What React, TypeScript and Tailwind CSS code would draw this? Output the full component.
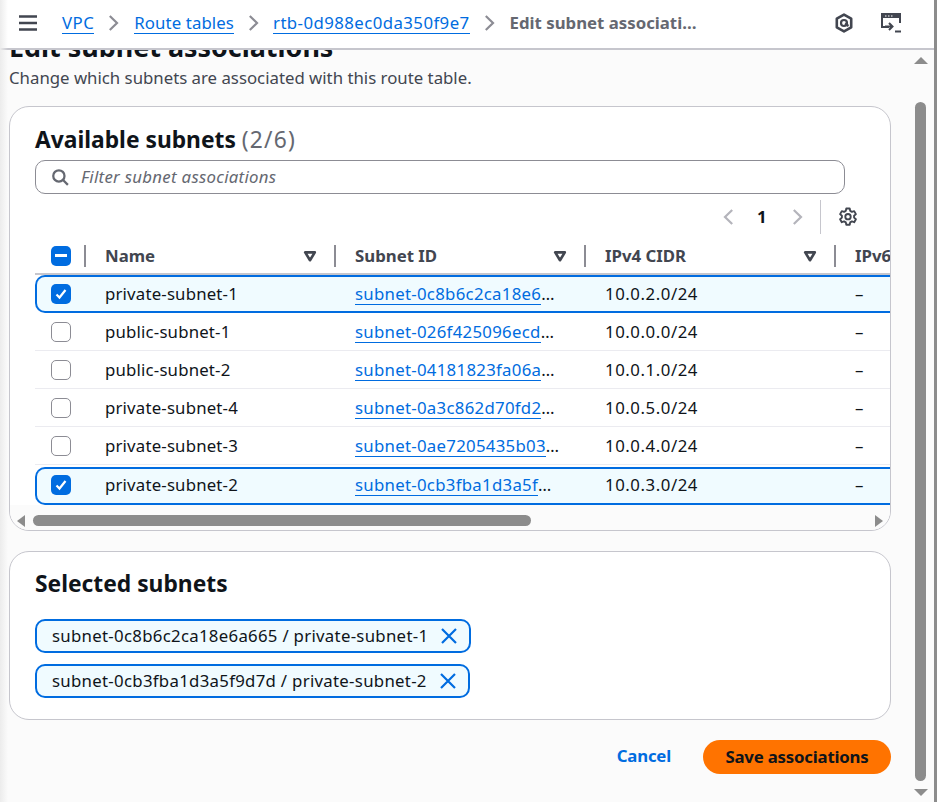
import React from "react";

const F = "font-['Noto_Sans',sans-serif]";

function Chevron({ className = "" }: { className?: string }) {
  return (
    <svg width="16" height="16" viewBox="0 0 16 16" fill="none" className={className}>
      <path d="M3.8 1 11 8 3.8 15" stroke="currentColor" strokeWidth="2.2" />
    </svg>
  );
}

function SortDown() {
  return (
    <svg width="14" height="14" viewBox="0 0 16 16" fill="none" className="text-[#424650]">
      <path d="M2.5 3.8h11L8 12.8z" stroke="currentColor" strokeWidth="3" strokeLinejoin="round" />
    </svg>
  );
}

function Check({ state }: { state: "on" | "off" | "mixed" }) {
  if (state === "off") {
    return <div className="h-5 w-5 rounded-[5px] border-[1.5px] border-[#8c8c94] bg-white" />;
  }
  return (
    <div className="flex h-5 w-5 items-center justify-center rounded-[5px] bg-[#006ce0]">
      {state === "on" ? (
        <svg width="14" height="14" viewBox="0 0 14 14" fill="none">
          <path d="M2.5 7.5 5.5 10.5 11.5 3" stroke="white" strokeWidth="2.2" />
        </svg>
      ) : (
        <div className="h-[3px] w-[12px] bg-white" />
      )}
    </div>
  );
}

const rows = [
  { name: "private-subnet-1", id: "subnet-0c8b6c2ca18e6", cidr: "10.0.2.0/24", on: true, last: false },
  { name: "public-subnet-1", id: "subnet-026f425096ecd", cidr: "10.0.0.0/24", on: false, last: false },
  { name: "public-subnet-2", id: "subnet-04181823fa06a", cidr: "10.0.1.0/24", on: false, last: false },
  { name: "private-subnet-4", id: "subnet-0a3c862d70fd2", cidr: "10.0.5.0/24", on: false, last: false },
  { name: "private-subnet-3", id: "subnet-0ae7205435b03", cidr: "10.0.4.0/24", on: false, last: false },
  { name: "private-subnet-2", id: "subnet-0cb3fba1d3a5f", cidr: "10.0.3.0/24", on: true, last: true },
];

function HeaderCell({ label }: { label: string }) {
  return (
    <div className="flex h-full w-[250px] shrink-0 items-center">
      <div className="h-[22px] w-[1.5px] shrink-0 bg-[#8c8c94]" />
      <div className="flex flex-1 items-center justify-between pl-[19.5px] pr-[17px]">
        <span className="font-bold text-[#424650]">{label}</span>
        <SortDown />
      </div>
    </div>
  );
}

function Row({ r }: { r: (typeof rows)[number] }) {
  return (
    <div
      className={`ml-[25px] flex h-[38px] shrink-0 items-center ${
        r.on
          ? `relative z-10 rounded-l-[10px] border-y-2 border-l-2 border-[#006ce0] bg-[#f0fbff] pl-[14px] ${
              r.last ? "mt-[2px] pb-[2px]" : ""
            }`
          : "border-b border-[#ebebf0] pl-[16px]"
      }`}
    >
      <div className="flex w-[54px] shrink-0 items-center">
        <Check state={r.on ? "on" : "off"} />
      </div>
      <div className="w-[250px] shrink-0 tracking-[0.18px] text-[#0f141a]">{r.name}</div>
      <div className="flex w-[250px] shrink-0 items-start whitespace-nowrap text-[#0f141a]">
        <span className="border-b border-[#006ce0] leading-[21px] tracking-[0.28px] text-[#006ce0]">{r.id}</span>
        <span className="leading-[21px]">…</span>
      </div>
      <div className="w-[250px] shrink-0 tracking-[0.55px] text-[#0f141a]">{r.cidr}</div>
      <div className="text-[#0f141a]">–</div>
    </div>
  );
}

function Token({ text }: { text: string }) {
  return (
    <div className="flex h-[34px] w-fit items-center gap-[12px] rounded-[10px] border-2 border-[#006ce0] bg-[#f0fbff] pl-[15px] pr-[11px] tracking-[0.29px] text-[#0f141a]">
      <span>{text}</span>
      <svg width="18" height="18" viewBox="0 0 18 18" fill="none">
        <path d="M2 2 16 16M16 2 2 16" stroke="#006ce0" strokeWidth="2.2" />
      </svg>
    </div>
  );
}

export default function App() {
  return (
    <div className={`flex h-[802px] w-[937px] overflow-hidden bg-[#fbfbfb] text-[16.8px] leading-[22px] ${F}`}>
      <div className="relative flex min-w-0 flex-1 flex-col overflow-hidden">
        <div className="relative z-20 flex h-[50px] shrink-0 items-center border-b-2 border-[#c6c6cd] bg-white pb-[3px] pl-[18px] pr-[32px]">
          <svg width="20" height="18" viewBox="0 0 20 18" fill="none" className="text-[#424650]">
            <path d="M1 2.5h18M1 9h18M1 15.5h18" stroke="currentColor" strokeWidth="2.4" />
          </svg>
          <a className="ml-[24px] border-b border-[#006ce0] leading-[21px] tracking-[0.5px] text-[#006ce0]">VPC</a>
          <Chevron className="mx-[12px] text-[#8c8c94]" />
          <a className="border-b border-[#006ce0] leading-[21px] tracking-[0.1px] text-[#006ce0]">Route tables</a>
          <Chevron className="ml-[12px] mr-[11px] text-[#8c8c94]" />
          <a className="border-b border-[#006ce0] leading-[21px] tracking-[0.43px] text-[#006ce0]">
            rtb-0d988ec0da350f9e7
          </a>
          <Chevron className="mx-[12px] text-[#8c8c94]" />
          <span className="font-bold text-[#656871]">Edit subnet associati…</span>
          <div className="ml-auto flex items-center gap-[26px] text-[#424650]">
            <svg width="20" height="20" viewBox="0 0 20 20" fill="none">
              <path d="M10 1.6 17.2 5.7v8.6L10 18.4l-7.2-4.1V5.7z" stroke="currentColor" strokeWidth="2.6" strokeLinejoin="round" />
              <circle cx="10" cy="10" r="3" stroke="currentColor" strokeWidth="2.2" />
              <path d="M11 10.5 14.5 13" stroke="currentColor" strokeWidth="2.2" />
            </svg>
            <svg width="22" height="22" viewBox="0 0 22 22" fill="none">
              <path d="M9 15H2V2h18v9" stroke="currentColor" strokeWidth="2" />
              <path d="M2 2h18v4H2z" fill="currentColor" />
              <path d="M5 14.5h7M9 11l3.5 3.5L9 18" stroke="currentColor" strokeWidth="2" />
              <path d="M15 19.5h6" stroke="currentColor" strokeWidth="2" />
              <path d="M5 4h1.5M8 4h1.5M11 4h1.5" stroke="white" strokeWidth="1" />
            </svg>
          </div>
        </div>

        <div className="pointer-events-none absolute bottom-0 left-0 top-0 z-30 w-[8px] bg-gradient-to-r from-[#ececec] to-transparent" />

        <div className="-mt-[18px] flex flex-1 flex-col pl-[9px] pr-[43px]">
          <h1 className="text-[26.9px] font-bold leading-[30px] text-[#0f141a]">Edit subnet associations</h1>
          <p className="mt-[5px] leading-[22px] text-[#424650]">Change which subnets are associated with this route table.</p>

          <section className="relative mt-[17px] flex h-[425px] flex-col overflow-hidden rounded-[20px] border border-[#c6c6cd] bg-white">
            <div className="px-[25px] pt-[18px]">
              <div className="text-[22.8px] leading-[30px]">
                <span className="font-bold text-[#0f141a]">Available subnets </span>
                <span className="tracking-[1.2px] text-[#656871]">(2/6)</span>
              </div>
              <div className="mt-[5px] flex h-[34px] w-[810px] items-center rounded-[10px] border border-[#8c8c94] pl-[15px]">
                <svg width="18" height="18" viewBox="0 0 16 16" fill="none" className="text-[#656871]">
                  <circle cx="7" cy="7" r="5" stroke="currentColor" strokeWidth="2" />
                  <path d="M10.5 10.5 15 15" stroke="currentColor" strokeWidth="2" />
                </svg>
                <span className="ml-[12px] italic tracking-[0.3px] text-[#656871]">Filter subnet associations</span>
              </div>
            </div>

            <div className="flex h-[44px] shrink-0 items-center justify-end pr-[32px] pt-[2px] text-[#b4b4bb]">
              <Chevron className="rotate-180" />
              <span className="ml-[21px] mr-[24px] w-[9px] font-bold text-[#0f141a]">1</span>
              <Chevron />
              <div className="ml-[14px] mr-[17px] h-[34px] w-px bg-[#c6c6cd]" />
              <svg width="20" height="20" viewBox="0 0 20 20" fill="none" className="text-[#424650]">
                <path
                  d="M8.3 1.5h3.4l.5 2.4 1.7 1 2.3-.8 1.7 3-1.8 1.6v1.9l1.8 1.6-1.7 3-2.3-.8-1.7 1-.5 2.4H8.3l-.5-2.4-1.7-1-2.3.8-1.7-3 1.8-1.6V8.7L2.1 7.1l1.7-3 2.3.8 1.7-1z"
                  stroke="currentColor"
                  strokeWidth="1.9"
                  strokeLinejoin="round"
                />
                <circle cx="10" cy="9.7" r="2.7" stroke="currentColor" strokeWidth="1.9" />
              </svg>
            </div>

            <div className="flex flex-col overflow-hidden">
              <div className="ml-[25px] flex h-[37px] shrink-0 items-center overflow-hidden whitespace-nowrap border-b-2 border-[#c6c6cd] pl-[16px]">
                <div className="flex h-full w-[33px] shrink-0 items-center">
                  <Check state="mixed" />
                </div>
                <HeaderCell label="Name" />
                <HeaderCell label="Subnet ID" />
                <HeaderCell label="IPv4 CIDR" />
                <div className="flex h-full shrink-0 items-center">
                  <div className="h-[22px] w-[1.5px] bg-[#8c8c94]" />
                  <span className="pl-[19.5px] font-bold text-[#424650]">IPv6</span>
                </div>
              </div>
              {rows.map((r) => (
                <Row key={r.name} r={r} />
              ))}
            </div>

            <div className="flex flex-1 items-center bg-[#fbfbfb] pt-[6px]">
              <div className="ml-[7px] h-0 w-0 border-y-[6px] border-r-[8px] border-y-transparent border-r-[#8c8c8c]" />
              <div className="ml-[8px] h-[11px] w-[498px] rounded-full bg-[#8c8c8c]" />
              <div className="ml-auto mr-[7px] h-0 w-0 border-y-[6px] border-l-[8px] border-y-transparent border-l-[#8c8c8c]" />
            </div>
          </section>

          <section className="mt-[20px] h-[169px] rounded-[20px] border border-[#c6c6cd] bg-white px-[25px] pt-[17px]">
            <h2 className="text-[22.8px] font-bold leading-[30px] text-[#0f141a]">Selected subnets</h2>
            <div className="mt-[20px] flex flex-col gap-[11px]">
              <Token text="subnet-0c8b6c2ca18e6a665 / private-subnet-1" />
              <Token text="subnet-0cb3fba1d3a5f9d7d / private-subnet-2" />
            </div>
          </section>

          <div className="mt-[20px] flex items-center justify-end">
            <span className="pb-[2px] font-bold tracking-[-0.2px] text-[#006ce0]">Cancel</span>
            <div className="ml-[32px] flex h-[34px] w-[188px] items-center justify-center rounded-full bg-[#ff7300] pb-[1px] font-bold tracking-[-0.2px] text-[#0f141a]">
              Save associations
            </div>
          </div>
        </div>

        <div className="absolute bottom-0 right-0 top-[50px] z-10 flex w-[22px] flex-col items-center pr-[5px]">
          <div className="mt-[7px] h-0 w-0 border-x-[7px] border-b-[7px] border-x-transparent border-b-[#8c8c8c]" />
          <div className="mt-[38px] h-[679px] w-[11px] rounded-full bg-[#8c8c8c]" />
          <div className="mb-[6px] mt-auto h-0 w-0 border-x-[7px] border-t-[7px] border-x-transparent border-t-[#8c8c8c]" />
        </div>
      </div>
      <div className="h-full w-[3px] shrink-0 bg-[#8c8c8c]" />
    </div>
  );
}
